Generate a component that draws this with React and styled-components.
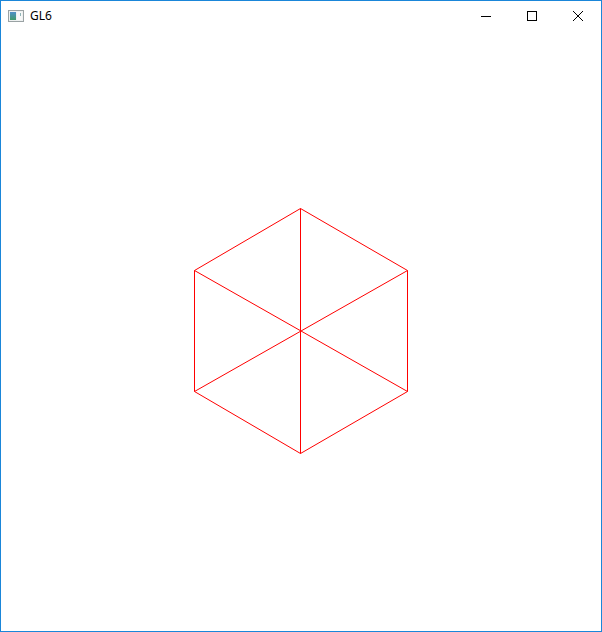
import React from "react";
import styled, { createGlobalStyle } from "styled-components";

const Global = createGlobalStyle`
  html, body { margin: 0; padding: 0; background: #ffffff; }
  body { font-family: "Noto Sans", "Open Sans", sans-serif; }
`;

const Window = styled.div`
  box-sizing: border-box;
  width: 602px;
  height: 632px;
  border: 1px solid #1a86d9;
  display: flex;
  flex-direction: column;
  background: #ffffff;
`;

const TitleBar = styled.div`
  height: 30px;
  display: flex;
  align-items: center;
  flex-shrink: 0;
`;

const AppIcon = styled.div`
  width: 16px;
  height: 16px;
  margin-left: 7px;
  display: flex;
`;

const Title = styled.span`
  margin-left: 6px;
  font-size: 12px;
  color: #000000;
  line-height: 16px;
  flex: 1;
`;

const CaptionButton = styled.div`
  width: 46px;
  height: 30px;
  display: flex;
  align-items: center;
  justify-content: center;
`;

const Canvas = styled.div`
  flex: 1;
  display: flex;
`;

const stroke = "#000000";

export default function App() {
  const T = [299.5, 177.5];
  const B = [299.5, 422.5];
  const UL = [193.5, 239.5];
  const LL = [193.5, 360.5];
  const UR = [406.5, 239.5];
  const LR = [406.5, 360.5];
  const lines = [
    [T, UR], [UR, LR], [LR, B], [B, LL], [LL, UL], [UL, T],
    [T, B], [UL, LR], [UR, LL],
  ];
  return (
    <>
      <Global />
      <Window>
        <TitleBar>
          <AppIcon>
            <svg width="16" height="16" viewBox="0 0 16 16">
              <defs>
                <linearGradient id="pane" x1="0" y1="0" x2="0" y2="1">
                  <stop offset="0" stopColor="#4f8fc9" />
                  <stop offset="1" stopColor="#3f9a6a" />
                </linearGradient>
              </defs>
              <rect x="0.5" y="2.5" width="15" height="11" fill="#eef1f1" stroke="#9aa2a4" />
              <rect x="2" y="4" width="6" height="8" fill="url(#pane)" />
              <rect x="9" y="4" width="5" height="8" fill="#f7f8f8" />
              <rect x="12" y="5" width="1" height="3" fill="#8fb4b6" />
            </svg>
          </AppIcon>
          <Title>GL6</Title>
          <CaptionButton>
            <svg width="10" height="10" viewBox="0 0 10 10">
              <line x1="0" y1="5.5" x2="10" y2="5.5" stroke={stroke} strokeWidth="1" />
            </svg>
          </CaptionButton>
          <CaptionButton>
            <svg width="10" height="10" viewBox="0 0 10 10">
              <rect x="0.5" y="0.5" width="9" height="9" fill="none" stroke={stroke} strokeWidth="1" />
            </svg>
          </CaptionButton>
          <CaptionButton>
            <svg width="10" height="10" viewBox="0 0 10 10">
              <path d="M0 0 L10 10 M10 0 L0 10" stroke={stroke} strokeWidth="1" />
            </svg>
          </CaptionButton>
        </TitleBar>
        <Canvas>
          <svg width="600" height="600" viewBox="0 0 600 600">
            {lines.map(([a, b], i) => (
              <line
                key={i}
                x1={a[0]}
                y1={a[1]}
                x2={b[0]}
                y2={b[1]}
                stroke="#ff0000"
                strokeWidth="1"
              />
            ))}
          </svg>
        </Canvas>
      </Window>
    </>
  );
}
